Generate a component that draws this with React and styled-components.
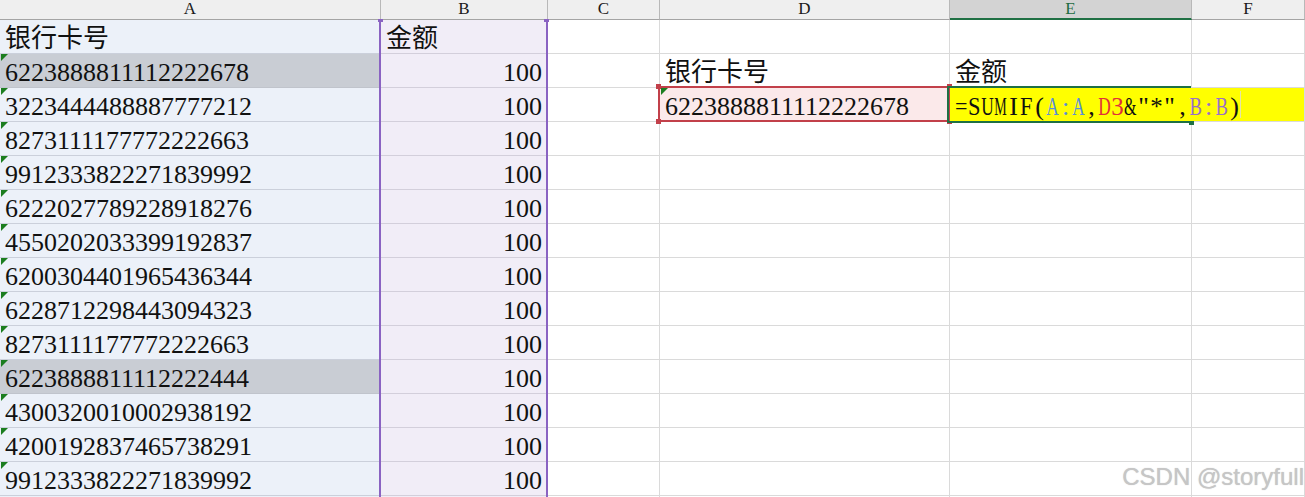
import React from 'react';
import styled, { createGlobalStyle, css } from 'styled-components';

const GlobalStyle = createGlobalStyle`
  html, body { margin: 0; padding: 0; background: #ffffff; }
  body { font-family: "Liberation Serif", "Noto Sans CJK SC", serif; }
`;

const TONES = {
  plain: { bg: '#ffffff', grid: '#dadada' },
  a: { bg: '#ecf1f9', grid: '#cbd0db' },
  aHi: { bg: '#c9cdd4', grid: '#c0c4cc' },
  b: { bg: '#f1edf7', grid: '#d3cfdb' },
  pink: { bg: '#fbe9ea', grid: '#dadada' },
  yellow: { bg: '#ffff00', grid: '#dadada' },
};

const Sheet = styled.div`
  position: relative;
  width: 1305px;
  height: 497px;
  overflow: hidden;
  display: grid;
  grid-template-columns: 381px 167px 112px 290px 242px 1fr;
  grid-template-rows: 20px;
  grid-auto-rows: 34px;
  font-family: "Liberation Serif", "Noto Sans CJK SC", serif;
  color: #111111;
  background: #ffffff;
`;

const HeaderCell = styled.div`
  box-sizing: border-box;
  background: ${(p) => (p.$active ? '#d3d3d3' : '#efefef')};
  color: ${(p) => (p.$active ? '#1d6b40' : '#1a1a1a')};
  border-right: 1px solid #b8b8b8;
  border-bottom: ${(p) => (p.$active ? '2px solid #1f7044' : '1px solid #a4a4a4')};
  font-size: 17px;
  line-height: 18px;
  text-align: center;
`;

const Cell = styled.div`
  position: relative;
  box-sizing: border-box;
  background: ${(p) => TONES[p.$tone].bg};
  border-right: 1px solid ${(p) => (p.$noRight ? TONES[p.$tone].bg : TONES[p.$tone].grid)};
  border-bottom: 1px solid ${(p) => TONES[p.$tone].grid};
  font-size: 26px;
  line-height: 30px;
  padding: 4px 5px 0 5px;
  white-space: nowrap;
  text-align: ${(p) => p.$align || 'left'};
  z-index: ${(p) => p.$z || 0};
  ${(p) =>
    p.$flag &&
    css`
      &::before {
        content: '';
        position: absolute;
        left: 1px;
        top: 0;
        width: 0;
        height: 0;
        border-top: 7px solid #1b7d1f;
        border-right: 7px solid transparent;
      }
    `}
  ${(p) =>
    p.$overflowEnd &&
    css`
      &::after {
        content: '';
        position: absolute;
        left: 48px;
        top: 3px;
        bottom: 3px;
        width: 1px;
        background: #e4e4a8;
      }
    `}
`;

const ColumnSelection = styled.div`
  position: absolute;
  left: 379px;
  top: 19px;
  width: 169px;
  bottom: 0;
  box-sizing: border-box;
  border-left: 2px solid #8a63c2;
  border-right: 2px solid #8a63c2;
  pointer-events: none;
  z-index: 3;
`;

const Handle = styled.span`
  position: absolute;
  width: ${(p) => p.$w || 5}px;
  height: ${(p) => p.$h || 5}px;
  background: ${(p) => p.$color};
  ${(p) => (p.$side === 'right' ? `right: ${p.$dx}px;` : `left: ${p.$dx}px;`)}
  ${(p) => (p.$edge === 'bottom' ? `bottom: ${p.$dy}px;` : `top: ${p.$dy}px;`)}
`;

const RedFrame = styled.div`
  position: absolute;
  left: -2px;
  top: -2px;
  right: -1px;
  bottom: -1px;
  border: 2px solid #c2404a;
  pointer-events: none;
  z-index: 4;
`;

const GreenFrame = styled.div`
  position: absolute;
  left: -3px;
  top: -2px;
  right: 0;
  bottom: -2px;
  border-top: 2px solid #1f7044;
  border-bottom: 2px solid #1f7044;
  border-left: 2px solid #1f7044;
  pointer-events: none;
`;

const FChar = styled.span`
  display: inline-flex;
  justify-content: center;
  width: 13px;
  color: ${(p) => p.$c || '#111111'};
`;

const Glyph = styled.span`
  display: inline-block;
  transform: scaleX(${(p) => p.$sx});
`;

const Watermark = styled.div`
  position: absolute;
  right: 1px;
  top: 465px;
  font-family: "Liberation Sans", Arial, sans-serif;
  font-size: 24px;
  line-height: 24px;
  color: #c6c6c6;
  text-shadow: 0 0 1px rgba(90, 90, 90, 0.35);
  pointer-events: none;
  z-index: 6;
`;

const WIDTHS = {
  '=': 0.564, S: 0.556, U: 0.722, M: 0.889, I: 0.333, F: 0.556, '(': 0.333, ')': 0.333,
  A: 0.722, ':': 0.278, ',': 0.25, D: 0.722, '3': 0.5, '&': 0.778, '"': 0.408, '*': 0.5, B: 0.667,
};

const FORMULA = [
  ['=SUMIF(', null],
  ['A:A', '#5a8fd8'],
  [',', null],
  ['D3', '#e0303a'],
  ['&"*",', null],
  ['B:B', '#9a70c9'],
  [')', null],
];

function Formula() {
  const chars = [];
  FORMULA.forEach(([text, color], si) => {
    text.split('').forEach((ch, ci) => {
      const w = WIDTHS[ch] || 0.5;
      const sx = Math.min(1, 0.48 / w);
      chars.push(
        <FChar key={`${si}-${ci}`} $c={color}>
          <Glyph $sx={sx}>{ch}</Glyph>
        </FChar>
      );
    });
  });
  return <>{chars}</>;
}

const NUMBERS = [
  '6223888811112222678',
  '3223444488887777212',
  '8273111177772222663',
  '9912333822271839992',
  '6222027789228918276',
  '4550202033399192837',
  '6200304401965436344',
  '6228712298443094323',
  '8273111177772222663',
  '6223888811112222444',
  '4300320010002938192',
  '4200192837465738291',
  '9912333822271839992',
];

const HIGHLIGHT = new Set([0, 9]);
const HEADERS = ['A', 'B', 'C', 'D', 'E', 'F'];

export default function App() {
  const rows = [];
  rows.push(
    <React.Fragment key="r1">
      <Cell $tone="a">银行卡号</Cell>
      <Cell $tone="b">金额</Cell>
      <Cell $tone="plain" />
      <Cell $tone="plain" />
      <Cell $tone="plain" />
      <Cell $tone="plain" />
    </React.Fragment>
  );
  for (let i = 0; i < 14; i++) {
    const num = NUMBERS[i];
    const rowNo = i + 2;
    let d = <Cell $tone="plain" />;
    let e = <Cell $tone="plain" />;
    let f = <Cell $tone="plain" />;
    if (rowNo === 2) {
      d = <Cell $tone="plain">银行卡号</Cell>;
      e = <Cell $tone="plain">金额</Cell>;
    }
    if (rowNo === 3) {
      d = (
        <Cell $tone="pink" $flag $z={4}>
          6223888811112222678
          <RedFrame>
            <Handle $color="#c2404a" $side="left" $dx={-4} $edge="top" $dy={-4} />
            <Handle $color="#c2404a" $side="right" $dx={-4} $edge="top" $dy={-4} />
            <Handle $color="#c2404a" $side="left" $dx={-4} $edge="bottom" $dy={-4} />
            <Handle $color="#c2404a" $side="right" $dx={-4} $edge="bottom" $dy={-4} />
          </RedFrame>
        </Cell>
      );
      e = (
        <Cell $tone="yellow" $noRight $z={5}>
          <Formula />
          <GreenFrame>
            <Handle $color="#1f7044" $side="right" $dx={-3} $edge="bottom" $dy={-4} $w={5} $h={4} />
          </GreenFrame>
        </Cell>
      );
      f = <Cell $tone="yellow" $overflowEnd />;
    }
    rows.push(
      <React.Fragment key={`r${rowNo}`}>
        <Cell $tone={HIGHLIGHT.has(i) ? 'aHi' : 'a'} $flag={!!num}>
          {num || ''}
        </Cell>
        <Cell $tone="b" $align="right">
          {num ? '100' : ''}
        </Cell>
        <Cell $tone="plain" />
        {d}
        {e}
        {f}
      </React.Fragment>
    );
  }

  return (
    <>
      <GlobalStyle />
      <Sheet>
        {HEADERS.map((h) => (
          <HeaderCell key={h} $active={h === 'E'}>
            {h}
          </HeaderCell>
        ))}
        {rows}
        <ColumnSelection>
          <Handle $color="#8a63c2" $side="left" $dx={-3} $edge="top" $dy={0} $w={5} $h={3} />
          <Handle $color="#8a63c2" $side="right" $dx={-3} $edge="top" $dy={0} $w={5} $h={3} />
        </ColumnSelection>
        <Watermark>CSDN @storyfull</Watermark>
      </Sheet>
    </>
  );
}
